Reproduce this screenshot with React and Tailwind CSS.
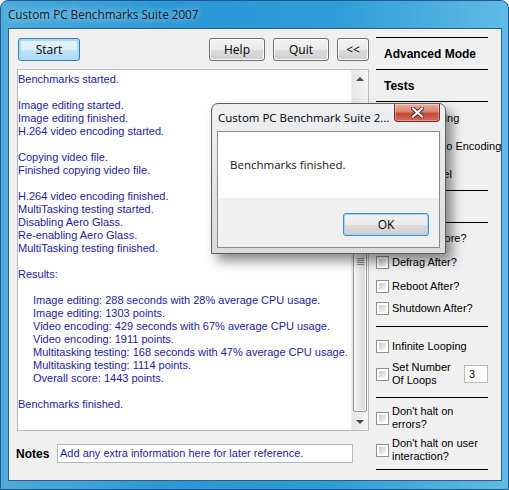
import React from 'react';
import clsx from 'clsx';

const logLines = [
    'Benchmarks started.',
    '',
    'Image editing started.',
    'Image editing finished.',
    'H.264 video encoding started.',
    '',
    'Copying video file.',
    'Finished copying video file.',
    '',
    'H.264 video encoding finished.',
    'MultiTasking testing started.',
    'Disabling Aero Glass.',
    'Re-enabling Aero Glass.',
    'MultiTasking testing finished.',
    '',
    'Results:',
    '',
    '>Image editing: 288 seconds with 28% average CPU usage.',
    '>Image editing: 1303 points.',
    '>Video encoding: 429 seconds with 67% average CPU usage.',
    '>Video encoding: 1911 points.',
    '>Multitasking testing: 168 seconds with 47% average CPU usage.',
    '>Multitasking testing: 1114 points.',
    '>Overall score: 1443 points.',
    '',
    'Benchmarks finished.',
];

// Win7 style push button
function Btn({ children, className, primary }) {
    return (
        <div
            className={clsx(
                'h-[23px] flex items-center justify-center rounded-[3px] border text-[12px] text-black font-["Open_Sans",sans-serif]',
                primary
                    ? 'border-[#3c7fb1] bg-[linear-gradient(#e8f5fc_0%,#d9effb_50%,#bfe6fc_50%,#a9dbf6_100%)] shadow-[inset_0_0_0_2px_#a8dcf6]'
                    : 'border-[#707070] bg-[linear-gradient(#f2f2f2_0%,#ebebeb_50%,#dddddd_50%,#cfcfcf_100%)] shadow-[inset_0_0_0_1px_#fbfbfb]',
                className
            )}
        >
            {children}
        </div>
    );
}

function Check() {
    return (
        <span className="w-[13px] h-[13px] shrink-0 border border-[#8e8f8f] bg-white p-[2px] flex">
            <span className="flex-1 bg-[linear-gradient(135deg,#c9cdd3,#f7f7f7)]" />
        </span>
    );
}

function CheckRow({ children, className }) {
    return (
        <div className={clsx('flex items-center gap-[3px] leading-[13px] whitespace-nowrap', className)}>
            <Check />
            <span>{children}</span>
        </div>
    );
}

function Arrow({ up }) {
    return up ? (
        <span className="w-0 h-0 border-x-[4px] border-x-transparent border-b-[4px] border-b-[#4a4a4a]" />
    ) : (
        <span className="w-0 h-0 border-x-[4px] border-x-transparent border-t-[4px] border-t-[#4a4a4a]" />
    );
}

function ScrollBar() {
    return (
        <div className="w-[17px] flex flex-col bg-[linear-gradient(90deg,#e6e6e6,#f4f4f4)] border-l border-[#ececec]">
            <div className="h-[17px] flex items-center justify-center">
                <Arrow up />
            </div>
            <div className="flex-1 flex flex-col pt-[24px] pb-[1px]">
                <div className="flex-1 mx-px rounded-[2px] border border-[#979797] bg-[linear-gradient(90deg,#f3f3f3_0%,#e8e8e8_45%,#d6d6d6_100%)] shadow-[inset_0_0_0_1px_#f9f9f9] flex flex-col items-center justify-center gap-[1px]">
                    <span className="w-[7px] h-px bg-[#8b8b8b]" />
                    <span className="w-[7px] h-px bg-[#8b8b8b]" />
                    <span className="w-[7px] h-px bg-[#8b8b8b]" />
                    <span className="w-[7px] h-px bg-[#8b8b8b]" />
                </div>
            </div>
            <div className="h-[17px] flex items-center justify-center">
                <Arrow />
            </div>
        </div>
    );
}

function MessageBox() {
    return (
        <div className="absolute left-[210px] top-[102px] w-[235px] h-[151px] rounded-t-[7px] border border-[#5e5e5e] bg-[linear-gradient(#eef0f2,#d9dcdf)] shadow-[6px_7px_12px_rgba(0,0,0,0.45)] flex flex-col font-['Open_Sans',sans-serif]">
            <div className="h-[27px] flex items-center pl-[6px] text-[11.5px] text-black">
                Custom PC Benchmark Suite 2...
            </div>
            {/* close button */}
            <div className="absolute right-[5px] top-0 w-[46px] h-[18px] rounded-b-[4px] border border-t-0 border-[#7a2a1e] bg-[linear-gradient(#eab0a1_0%,#d98570_45%,#c54a33_55%,#cf6a55_100%)] shadow-[inset_0_0_0_1px_rgba(255,255,255,0.35)] flex items-center justify-center">
                <svg width="13" height="11" viewBox="0 0 13 11">
                    <path d="M2 1.5 L11 9.5 M11 1.5 L2 9.5" stroke="#5a1f16" strokeWidth="4" strokeLinecap="square" />
                    <path d="M2 1.5 L11 9.5 M11 1.5 L2 9.5" stroke="#ffffff" strokeWidth="2.2" strokeLinecap="square" />
                </svg>
            </div>
            <div className="mx-[5px] h-[117px] border border-[#8a8a8a] flex flex-col">
                <div className="h-[66px] bg-white flex items-center pl-[12px] text-[11.5px] text-[#141414]">
                    Benchmarks finished.
                </div>
                <div className="flex-1 bg-[#f0f0f0] flex justify-end items-start pt-[15px] pr-[10px]">
                    <div className="w-[86px] h-[23px] rounded-[3px] border border-[#3c8fd2] bg-[linear-gradient(#f2f2f2_0%,#ebebeb_50%,#dddddd_50%,#cfcfcf_100%)] shadow-[inset_0_0_0_1px_#9fd6f3] flex items-center justify-center text-[12px] text-black">
                        OK
                    </div>
                </div>
            </div>
        </div>
    );
}

export default function App() {
    return (
        <div className="relative w-[509px] h-[490px] rounded-t-[8px] border border-[#22598a] bg-[linear-gradient(90deg,#4eabdd_0%,#2a97d4_35%,#2e9cd7_65%,#5fbbe6_100%)] flex flex-col font-['Liberation_Sans',Arial,sans-serif] text-[11px] text-black overflow-hidden">
            {/* title bar */}
            <div className="h-[27px] flex items-center pl-[7px] text-[11.7px] text-[#0c1825] font-['Open_Sans',sans-serif] [text-shadow:0_0_6px_rgba(255,255,255,0.9)]">
                Custom PC Benchmarks Suite 2007
            </div>

            {/* client area */}
            <div className="ml-[7px] mr-[6px] h-[453px] border border-[#2a5f86] bg-[#f0f0f0] flex">
                {/* left column */}
                <div className="ml-[8px] pt-[9px] w-[352px] flex flex-col">
                    <div className="flex items-center">
                        <Btn primary className="ml-px w-[62px]">Start</Btn>
                        <Btn className="ml-[129px] w-[56px]">Help</Btn>
                        <Btn className="ml-[8px] w-[56px]">Quit</Btn>
                        <Btn className="ml-[8px] w-[32px]">&lt;&lt;</Btn>
                    </div>

                    <div className="mt-[8px] h-[362px] border border-[#b7bbc0] bg-white flex">
                        <div className="flex-1 pt-[3px] text-[#1c1c9e]">
                            {logLines.map((line, i) => (
                                <div
                                    key={i}
                                    className={clsx('h-[13px] leading-[13px] whitespace-pre', line.startsWith('>') && 'pl-[15px]')}
                                >
                                    {line.replace('>', '')}
                                </div>
                            ))}
                        </div>
                        <ScrollBar />
                    </div>

                    <div className="mt-[13px] flex items-center">
                        <span className="-ml-px w-[41px] font-bold text-[12px]">Notes</span>
                        <div className="w-[296px] h-[19px] border border-[#b7bbc0] bg-white flex items-center pl-[2px] text-[#1c1c9e] whitespace-nowrap">
                            Add any extra information here for later reference.
                        </div>
                    </div>
                </div>

                {/* right panel */}
                <div className="ml-[7px] mt-[8px] w-[112px] flex flex-col">
                    <div className="h-[32px] border-t border-black flex items-center pl-[8px] font-bold text-[12px]">
                        Advanced Mode
                    </div>
                    <div className="h-[32px] border-t border-black flex items-center pl-[8px] font-bold text-[12px]">
                        Tests
                    </div>
                    <div className="h-[89px] border-t border-black pt-[2px] flex flex-col">
                        <CheckRow className="h-[28px]">Image Editing</CheckRow>
                        <CheckRow className="h-[28px]">H.264 Video Encoding</CheckRow>
                        <CheckRow className="h-[28px]">Run Parallel</CheckRow>
                    </div>
                    <div className="h-[32px] border-t border-black" />
                    <div className="h-[104px] border-t border-black pt-[7px] flex flex-col">
                        <CheckRow className="h-[16px]">Defrag Before?</CheckRow>
                        <CheckRow className="h-[16px] mt-[8px]">Defrag After?</CheckRow>
                        <CheckRow className="h-[16px] mt-[8px]">Reboot After?</CheckRow>
                        <CheckRow className="h-[16px] mt-[6px]">Shutdown After?</CheckRow>
                    </div>
                    <div className="h-[71px] border-t border-black pt-[11px] flex flex-col">
                        <CheckRow className="h-[16px]">Infinite Looping</CheckRow>
                        <div className="mt-[7px] h-[26px] flex items-center">
                            <CheckRow>
                                Set Number
                                <br />
                                Of Loops
                            </CheckRow>
                            <div className="ml-auto w-[24px] h-[18px] border border-[#b7bbc0] bg-white flex items-center pl-[4px]">
                                3
                            </div>
                        </div>
                    </div>
                    <div className="h-[72px] border-t border-black pt-[7px] flex flex-col">
                        <CheckRow className="h-[26px]">
                            Don't halt on
                            <br />
                            errors?
                        </CheckRow>
                        <CheckRow className="h-[26px] mt-[6px]">
                            Don't halt on user
                            <br />
                            interaction?
                        </CheckRow>
                    </div>
                    <div className="border-t border-black" />
                </div>
            </div>

            <MessageBox />
        </div>
    );
}
